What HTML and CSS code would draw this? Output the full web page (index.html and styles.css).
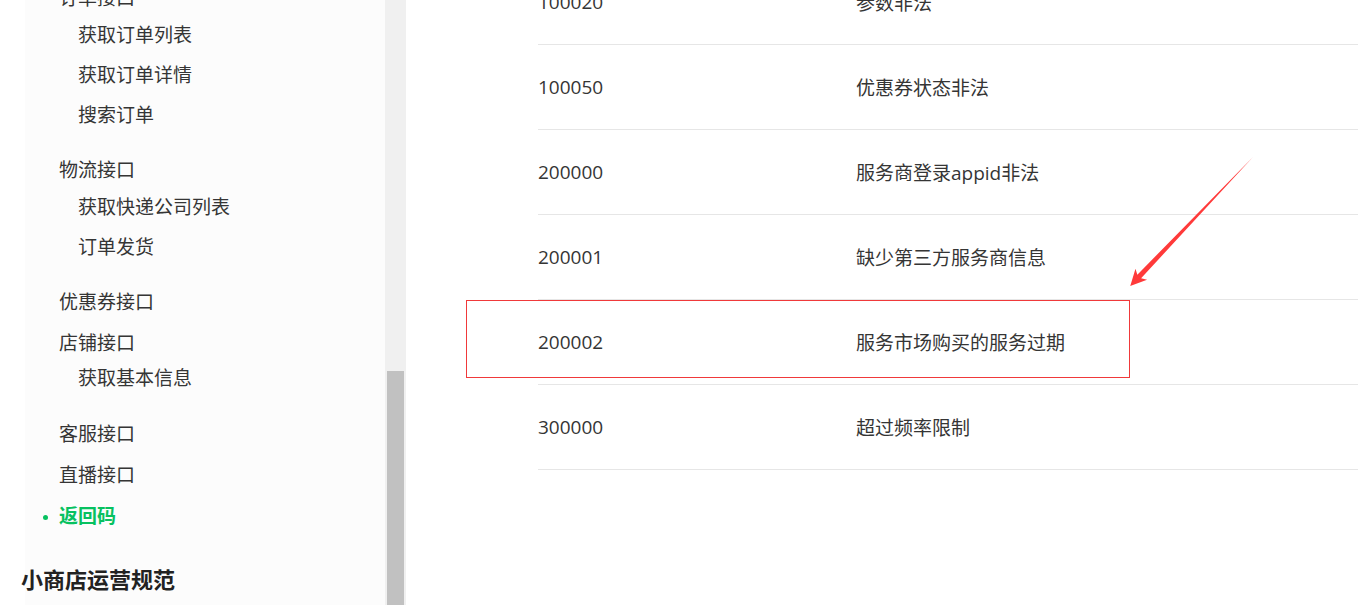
FILE: index.html
```html
<!DOCTYPE html>
<html lang="zh-CN">
<head>
    <meta charset="UTF-8">
    <meta name="viewport" content="width=device-width, initial-scale=1.0">
    <title>小商店 - 返回码</title>
    <link rel="stylesheet" href="styles.css">
</head>
<body>

    <div class="sidebar">
        <div class="sideInner">
            <ul class="menu">
                <li>
                    <a href="#">订单接口</a>
                    <ul class="subMenu">
                        <li><a href="#">获取订单列表</a></li>
                        <li><a href="#">获取订单详情</a></li>
                        <li><a href="#">搜索订单</a></li>
                    </ul>
                </li>
                <li>
                    <a href="#">物流接口</a>
                    <ul class="subMenu">
                        <li><a href="#">获取快递公司列表</a></li>
                        <li><a href="#">订单发货</a></li>
                    </ul>
                </li>
                <li><a href="#">优惠券接口</a></li>
                <li>
                    <a href="#">店铺接口</a>
                    <ul class="subMenu short">
                        <li><a href="#">获取基本信息</a></li>
                    </ul>
                </li>
                <li><a href="#">客服接口</a></li>
                <li><a href="#">直播接口</a></li>
                <li><a href="#" class="active">返回码</a></li>
            </ul>

            <h3 class="sideTitle">小商店运营规范</h3>
        </div>

        <!-- barra de rolagem -->
        <div class="scrollTrack">
            <div class="scrollThumb"></div>
        </div>
    </div>

    <div class="mainContent">
        <div class="codeTable">
            <div class="codeRow"><span>100020</span><span>参数非法</span></div>
            <div class="codeRow"><span>100050</span><span>优惠券状态非法</span></div>
            <div class="codeRow"><span>200000</span><span>服务商登录appid非法</span></div>
            <div class="codeRow"><span>200001</span><span>缺少第三方服务商信息</span></div>
            <div class="codeRow"><span>200002</span><span>服务市场购买的服务过期</span></div>
            <div class="codeRow"><span>300000</span><span>超过频率限制</span></div>
        </div>
    </div>

    <!-- marcação em vermelho por cima da página -->
    <svg class="annotations" width="1358" height="605" viewBox="0 0 1358 605">
        <rect x="466.5" y="300.5" width="663" height="77" fill="none" stroke="#f0393a" stroke-width="1"/>
        <g transform="translate(1253 157) rotate(133.6)">
            <polygon points="0,0 165,-2.6 162,-8 178,0 162,8 165,2.6" fill="#ff3a3a"/>
        </g>
    </svg>

</body>
</html>
```

FILE: styles.css
```css
html {
    overflow: hidden;
}

body {
    margin: 0;
    height: 605px;
    overflow: hidden;
    display: flex;
    background-color: #ffffff;
    color: #353535;
    font-family: "Open Sans", "Noto Sans CJK SC", sans-serif;
    font-size: 19px;
}

a {
    color: inherit;
    text-decoration: none;
}

/* Barra lateral */
.sidebar {
    width: 406px;
    flex-shrink: 0;
    display: flex;
}

.sideInner {
    flex-grow: 1;
    margin-left: 25px;
    background-color: #fcfcfc;
}

.menu,
.subMenu {
    list-style: none;
    margin: 0;
    padding: 0;
}

.menu {
    margin-top: -22px;
}

.menu > li > a {
    display: block;
    position: relative;
    height: 41px;
    line-height: 41px;
    padding-left: 34px;
}

.subMenu {
    margin-top: -4px;
    margin-bottom: 15px;
}

.subMenu.short {
    margin-top: -6px;
    margin-bottom: 16px;
}

.subMenu a {
    display: block;
    height: 40px;
    line-height: 40px;
    padding-left: 53px;
}

.menu a.active {
    color: #07c160;
    font-weight: bold;
}

.menu a.active::before {
    content: "";
    position: absolute;
    left: 18px;
    top: 19px;
    width: 5px;
    height: 5px;
    border-radius: 50%;
    background-color: #07c160;
}

.sideTitle {
    margin: 26px 0 0 -4px;
    font-size: 22px;
    line-height: 32px;
    font-weight: bold;
    color: #222222;
}

.scrollTrack {
    width: 21px;
    background-color: #f0f0f0;
    padding-top: 371px;
    box-sizing: border-box;
}

.scrollThumb {
    margin-left: 2px;
    width: 17px;
    height: 234px;
    background-color: #c1c1c1;
}

/* Conteúdo principal */
.mainContent {
    flex-grow: 1;
    padding-left: 132px;
}

.codeTable {
    margin-top: -40px;
}

.codeRow {
    display: grid;
    grid-template-columns: 318px 1fr;
    align-items: center;
    height: 84px;
    border-bottom: 1px solid #e6e6e6;
}

.annotations {
    position: absolute;
    top: 0;
    left: 0;
    pointer-events: none;
}
```
